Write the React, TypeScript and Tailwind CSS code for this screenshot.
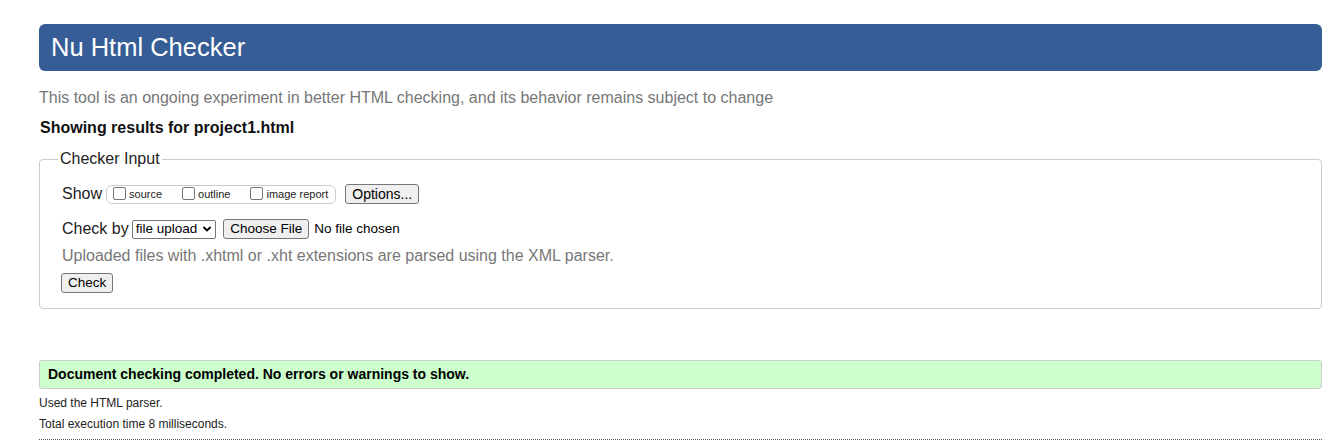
import React from "react";

function Btn({ children, className = "" }: { children: React.ReactNode; className?: string }) {
  return (
    <button
      type="button"
      className={`bg-[#efefef] border border-[#767676] rounded-[3px] text-[13.5px] leading-[16px] text-black px-[6px] py-[1px] ${className}`}
    >
      {children}
    </button>
  );
}

function Box({ label, className = "" }: { label: string; className?: string }) {
  return (
    <label className={`flex items-center text-[11px] text-[#222] ${className}`}>
      <span className="inline-block w-[13px] h-[13px] border border-[#767676] rounded-[2px] bg-white mr-[3px] -mt-[2px]" />
      {label}
    </label>
  );
}

export default function App() {
  return (
    <div className="pl-[39px] pr-[19px] pb-[10px] bg-white text-[#222]" style={{ fontFamily: '"Liberation Sans", Arial, sans-serif' }}>
      <div className="mt-[24px] h-[47px] rounded-md bg-[#365d95] pl-[12px] flex items-center text-white text-[25.5px]">
        Nu Html Checker
      </div>

      <p className="mt-[17px] text-[16px] leading-5 text-[#777]">
        This tool is an ongoing experiment in better HTML checking, and its behavior remains subject to change
      </p>

      <p className="mt-[10px] pl-[1px] text-[16px] leading-5 font-bold text-[#111]">
        Showing results for project1.html
      </p>

      <fieldset className="mt-[11px] border border-[#ccc] rounded-[4px] pl-[18px] pr-4 pb-[14px]">
        <legend className="px-[2px] text-[16px] leading-5 text-[#222]">Checker Input</legend>

        <div className="mt-[15px] ml-[4px] flex items-center h-[20px]">
          <span className="text-[16px] mr-[4px]">Show</span>
          <div className="flex items-center h-[19px] border border-[#ccc] rounded-md pl-[6px] pr-[7px]">
            <Box label="source" className="mr-[20px]" />
            <Box label="outline" className="mr-[20px]" />
            <Box label="image report" />
          </div>
          <Btn className="ml-[9px] h-[20px] text-[14px]">Options...</Btn>
        </div>

        <div className="mt-[15px] ml-[4px] flex items-center h-[20px]">
          <span className="text-[16px] mr-[3px]">Check by</span>
          <div className="flex items-center h-[19px] border border-[#767676] rounded-[2px] pl-[3px] pr-[3px] text-[13.5px] text-black">
            file upload
            <svg width="10" height="10" viewBox="0 0 10 10" className="ml-[5px]">
              <path d="M1.5 3 L5 6.5 L8.5 3" fill="none" stroke="#000" strokeWidth="1.8" />
            </svg>
          </div>
          <Btn className="ml-[7px] h-[20px]">Choose File</Btn>
          <span className="ml-[5px] text-[13.5px] text-black">No file chosen</span>
        </div>

        <p className="mt-[7px] ml-[4px] text-[16px] leading-5 text-[#777]">
          Uploaded files with .xhtml or .xht extensions are parsed using the XML parser.
        </p>

        <div className="mt-[4px] ml-[3px]">
          <Btn className="h-[20px]">Check</Btn>
        </div>
      </fieldset>

      <div className="mt-[51px] h-[29px] bg-[#ccffcc] border border-[#ccc] rounded-[3px] flex items-center pl-[8px] text-[14px] font-bold text-black">
        Document checking completed. No errors or warnings to show.
      </div>

      <p className="mt-[6px] text-[12px] leading-4 text-[#222]">Used the HTML parser.</p>
      <p className="mt-[5px] text-[12px] leading-4 text-[#222]">Total execution time 8 milliseconds.</p>
      <div className="mt-[7px] border-b border-dotted border-[#555]" />
    </div>
  );
}
